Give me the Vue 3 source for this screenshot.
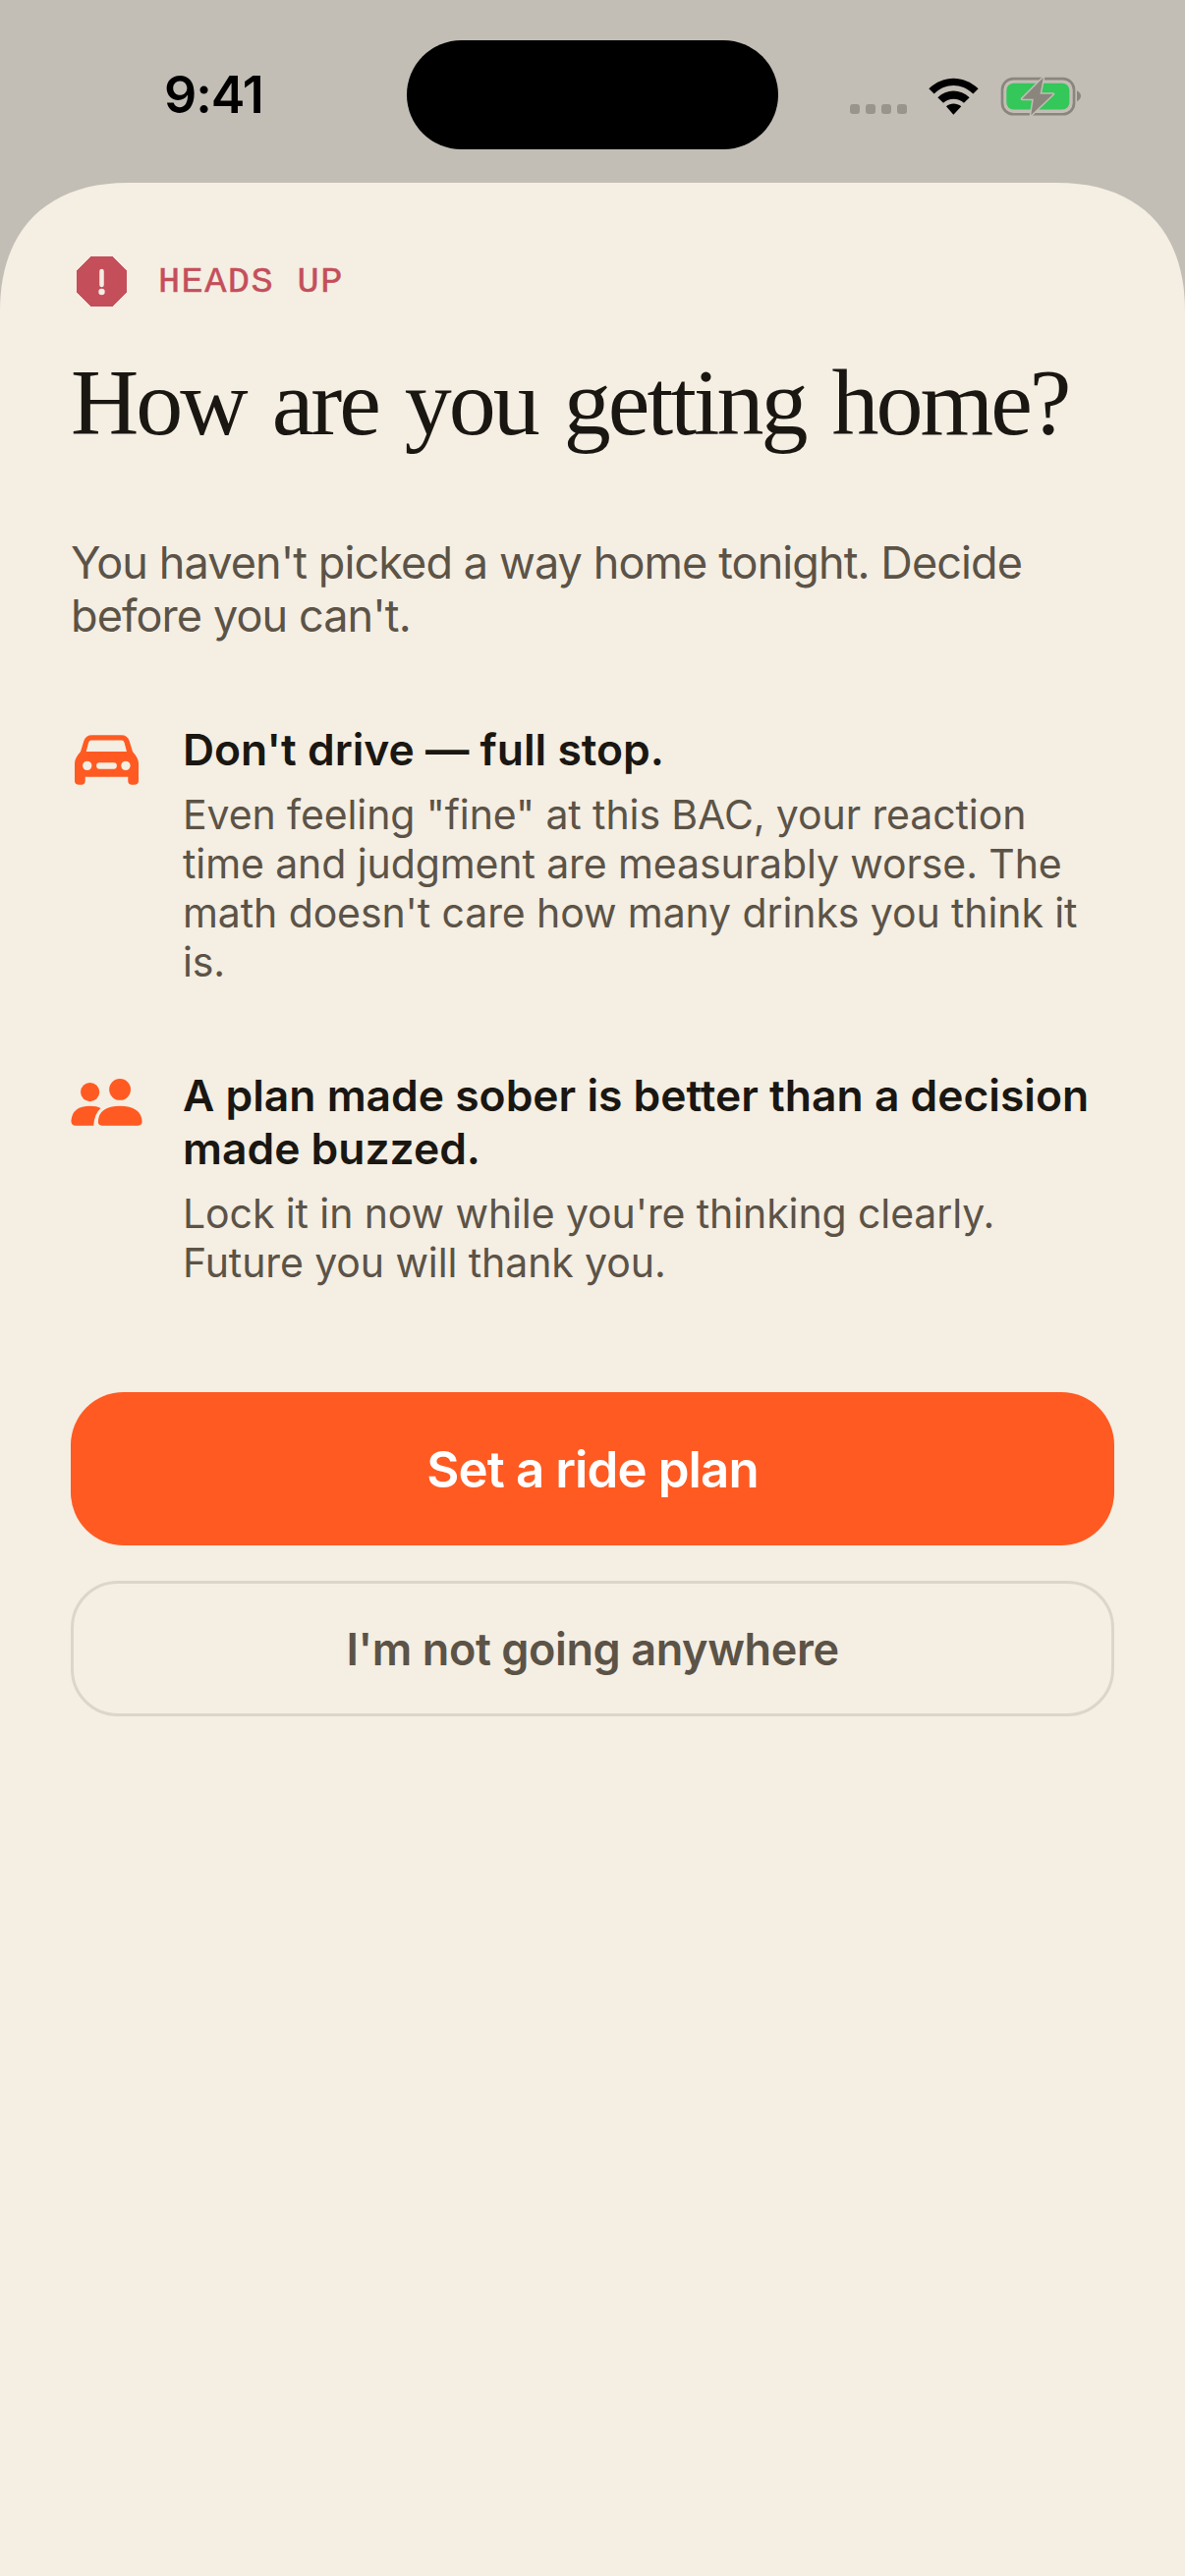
<script setup>
const features = [
  {
    id: 'car',
    title: "Don't drive — full stop.",
    body: 'Even feeling "fine" at this BAC, your reaction time and judgment are measurably worse. The math doesn\'t care how many drinks you think it is.'
  },
  {
    id: 'people',
    title: 'A plan made sober is better than a decision made buzzed.',
    body: "Lock it in now while you're thinking clearly. Future you will thank you."
  }
]
</script>

<template>
  <div class="screen">
    <header class="status">
      <div class="time">9:41</div>
      <div class="island"></div>
      <div class="indicators">
        <div class="dots"><i></i><i></i><i></i><i></i></div>
        <svg class="wifi" viewBox="315 85 153 113">
          <path d="M316 118C360 76 422 76 467 118L451 134C415 100 367 100 332 134Z" />
          <path d="M343 145C370 118 412 118 440 145L423 162C405 146 378 146 360 162Z" />
          <path d="M369 172C382 161 400 161 415 172L391 198Z" />
        </svg>
        <svg class="battery" viewBox="533 82 247 120">
          <rect x="539" y="88" width="220" height="109" rx="34" fill="none" stroke="#8a857d" stroke-width="8" />
          <rect x="552" y="102" width="193" height="81" rx="22" fill="#34c759" />
          <path d="M768 125Q780 132 780 141Q780 150 768 158Z" fill="#8a857d" />
          <path d="M665 85L600 150H635L627 200L695 135H655Z" fill="#8a857d" stroke="#c2bdb5" stroke-width="9" stroke-linejoin="round" paint-order="stroke" />
        </svg>
      </div>
    </header>

    <main class="sheet">
      <div class="eyebrow">
        <svg class="stop" viewBox="0 0 51 51">
          <path d="M15 0H36L51 15V36L36 51H15L0 36V15Z" fill="#c44f5a" stroke="#c44f5a" stroke-width="1" stroke-linejoin="round" />
          <path d="M25.5 15V29" stroke="#f4eee3" stroke-width="4.5" stroke-linecap="round" />
          <circle cx="25.5" cy="36" r="3.2" fill="#f4eee3" />
        </svg>
        <span>HEADS UP</span>
      </div>

      <h1>How are you getting home?</h1>
      <p class="lead">You haven't picked a way home tonight. Decide before you can't.</p>

      <section v-for="f in features" :key="f.id" class="feature">
        <div class="icon-cell">
          <svg v-if="f.id === 'car'" class="car" viewBox="78 85 194 151">
            <path fill-rule="evenodd" d="M130 85H220Q238 85 244 102L254 135Q272 155 272 170V225Q272 236 258 236H252Q240 236 240 225V212H110V225Q110 236 98 236H92Q78 236 78 225V170Q78 155 96 135L106 102Q112 85 130 85ZM128 101Q122 101 120 108L113 135H236L229 108Q227 101 221 101ZM116 164A14 14 0 1 0 116 192A14 14 0 1 0 116 164ZM233 164A14 14 0 1 0 233 192A14 14 0 1 0 233 164ZM153 169Q144 169 144 178Q144 188 153 188H197Q206 188 206 178Q206 169 197 169Z" />
          </svg>
          <svg v-else class="people" viewBox="66 57 218 145">
            <circle cx="124" cy="98" r="29" />
            <circle cx="216" cy="90" r="33" />
            <path d="M149 188Q152 141 216 141Q280 141 284 188Q284 201 272 201H161Q148 201 149 188Z" />
            <path d="M66 186Q70 141 124 141Q145 141 157 148Q137 165 135 201H80Q66 201 66 186Z" />
          </svg>
        </div>
        <div class="copy">
          <h2>{{ f.title }}</h2>
          <p>{{ f.body }}</p>
        </div>
      </section>

      <button class="primary">Set a ride plan</button>
      <button class="secondary">I'm not going anywhere</button>
    </main>
  </div>
</template>

<style>
html, body { margin: 0; background: #f4eee3; }
</style>

<style scoped>
.screen {
  width: 1206px;
  height: 2622px;
  display: flex;
  flex-direction: column;
  background: #c2bdb5;
  font-family: Inter, "Liberation Sans", sans-serif;
  overflow: hidden;
}
.status {
  height: 186px;
  flex: none;
  display: grid;
  grid-template-columns: 414px 378px 414px;
  align-items: start;
}
.time {
  margin-top: 66px;
  padding-left: 167px;
  font-size: 52px;
  line-height: 62px;
  font-weight: 600;
  color: #000;
  letter-spacing: -1px;
}
.island {
  margin-top: 41px;
  height: 111px;
  border-radius: 56px;
  background: #000;
}
.indicators {
  margin-top: 78px;
  display: flex;
  align-items: flex-end;
  padding-left: 73px;
}
.dots {
  display: flex;
  gap: 6px;
  margin-bottom: 1px;
  margin-right: 22px;
}
.dots i {
  width: 10px;
  height: 10px;
  border-radius: 3px;
  background: #9a958c;
}
.wifi { width: 51px; height: 38px; fill: #000; margin-right: 22px; flex: none; }
.battery { width: 82px; height: 40px; flex: none; margin-bottom: -1px; }

.sheet {
  flex: 1;
  background: #f4eee3;
  clip-path: path("M0 130C0 48 48 0 130 0H1076C1158 0 1206 48 1206 130V2436H0Z");
  padding: 75px 72px 0;
  display: flex;
  flex-direction: column;
}
.eyebrow {
  display: flex;
  align-items: center;
  gap: 32px;
  padding-left: 6px;
  height: 50px;
  color: #c44f5a;
  font-family: "Liberation Mono", monospace;
  font-size: 37px;
  letter-spacing: 1.4px;
  line-height: 50px;
  -webkit-text-stroke: 0.5px #c44f5a;
}
.eyebrow span { padding-top: 2px; }
.stop { width: 51px; height: 51px; flex: none; }
h1 {
  margin: 41px 0 0;
  font-family: "Liberation Serif", serif;
  font-weight: 400;
  font-size: 96px;
  line-height: 116px;
  letter-spacing: -3px;
  word-spacing: 6px;
  color: #1a1712;
  white-space: nowrap;
}
.lead {
  margin: 78px 0 0;
  font-size: 45px;
  line-height: 54px;
  letter-spacing: -0.9px;
  color: #5c5347;
}
.feature {
  display: flex;
  margin-top: 82px;
}
.feature + .feature { margin-top: 84px; }
.icon-cell {
  width: 114px;
  flex: none;
  display: flex;
  align-items: flex-start;
}
.car { width: 65px; height: 51px; fill: #ff5a22; margin: 12px 0 0 4px; }
.people { width: 73px; height: 48px; fill: #ff5a22; margin-top: 10px; }
h2 {
  margin: 0;
  font-size: 44.4px;
  line-height: 54px;
  font-weight: 600;
  color: #1a1712;
}
.copy { flex: 1; min-width: 0; }
.copy p {
  margin: 14px 0 0;
  font-size: 41px;
  line-height: 50px;
  letter-spacing: -0.1px;
  color: #5c5347;
}
button {
  font-family: inherit;
  display: block;
  width: 100%;
  box-sizing: border-box;
  padding: 0;
  cursor: pointer;
}
.primary {
  margin-top: 107px;
  height: 156px;
  border: 0;
  border-radius: 54px;
  background: #ff5a22;
  color: #fff;
  font-size: 51px;
  letter-spacing: -0.9px;
  font-weight: 600;
}
.secondary {
  margin-top: 36px;
  height: 138px;
  border: 3px solid #ddd5ca;
  border-radius: 48px;
  background: transparent;
  color: #5c5347;
  font-size: 45px;
  letter-spacing: -0.4px;
  font-weight: 600;
}
</style>
